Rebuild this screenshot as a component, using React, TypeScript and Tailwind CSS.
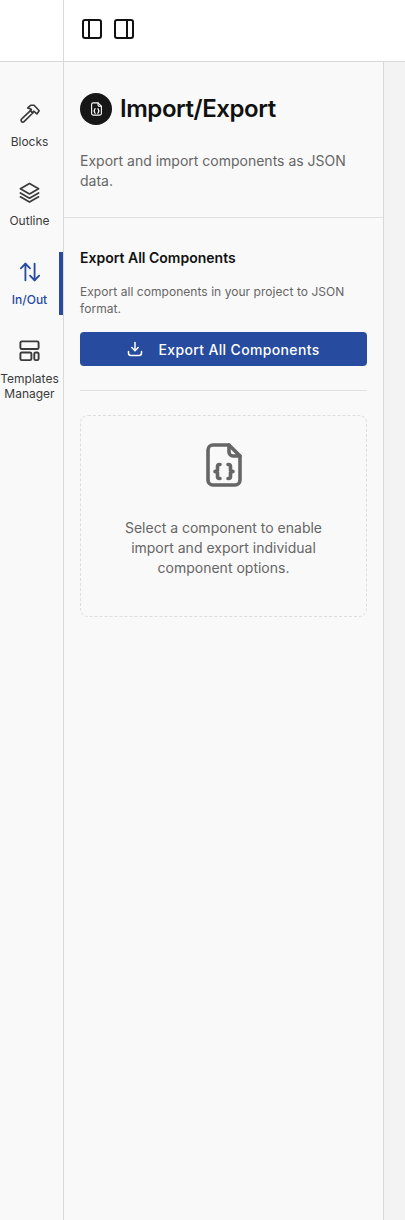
import type { ReactNode } from "react";

function FileJsonIcon({ className }: { className?: string }) {
  return (
    <svg viewBox="0 0 36 44" fill="none" stroke="currentColor" strokeWidth="3.6" strokeLinecap="round" strokeLinejoin="round" className={className}>
      <path d="M23 2H7a5 5 0 0 0-5 5v30a5 5 0 0 0 5 5h22a5 5 0 0 0 5-5V13L23 2z" />
      <path d="M23 2v7a4 4 0 0 0 4 4h7" />
      <path d="M14 21.5h-.5a2 2 0 0 0-2 2V26a2 2 0 0 1-2.5 2.500 2 2 0 0 1 2.500 2.500v2.500a2 2 0 0 0 2 2h.5" />
      <path d="M22 21.500h.5a2 2 0 0 1 2 2V26a2 2 0 0 0 2.500 2.500 2 2 0 0 0-2.500 2.500v2.500a2 2 0 0 1-2 2H22" />
    </svg>
  );
}

function HammerIcon({ className }: { className?: string }) {
  return (
    <svg viewBox="0 0 24 24" fill="none" stroke="currentColor" strokeWidth="1.8" strokeLinecap="round" strokeLinejoin="round" className={className}>
      <path d="M3 18.500 12.500 9.500l2.500 2.500-9.500 9.500a1.800 1.800 0 0 1-2.500-3z" />
      <path d="M9.500 6.500 13 3.500h3.500L22 9.500 19.500 13l-3.500-3-1 2-2.500-2.500 1-1.500z" />
    </svg>
  );
}

function LayersIcon({ className }: { className?: string }) {
  return (
    <svg viewBox="0 0 24 24" fill="none" stroke="currentColor" strokeWidth="1.800" strokeLinecap="round" strokeLinejoin="round" className={className}>
      <path d="M12 2.500 21.500 8 12 13.500 2.500 8z" />
      <path d="M2.500 12.500 12 18l9.500-5.500" />
      <path d="M2.500 16.500 12 22l9.500-5.500" />
    </svg>
  );
}

function SwapIcon({ className }: { className?: string }) {
  return (
    <svg viewBox="0 0 24 24" fill="none" stroke="currentColor" strokeWidth="2" strokeLinecap="round" strokeLinejoin="round" className={className}>
      <path d="M7 21V3" />
      <path d="M2 8l5-5 5 5" />
      <path d="M17 3v18" />
      <path d="M12 16l5 5 5-5" />
    </svg>
  );
}

function TemplatesIcon({ className }: { className?: string }) {
  return (
    <svg viewBox="0 0 24 24" fill="none" stroke="currentColor" strokeWidth="2" strokeLinejoin="round" className={className}>
      <rect x="2.500" y="2.500" width="19" height="8" rx="1.500" />
      <rect x="2.500" y="14" width="11.500" height="8" rx="1.500" />
      <rect x="17" y="14" width="4.500" height="8" rx="1.500" />
    </svg>
  );
}

function DownloadIcon({ className }: { className?: string }) {
  return (
    <svg viewBox="0 0 16 16" fill="none" stroke="currentColor" strokeWidth="1.500" strokeLinecap="round" strokeLinejoin="round" className={className}>
      <path d="M8 1.500v8" />
      <path d="M4.800 6.500 8 9.700l3.200-3.200" />
      <path d="M1.500 10.500v1.500a2.500 2.500 0 0 0 2.500 2.500h8a2.500 2.500 0 0 0 2.500-2.500v-1.500" />
    </svg>
  );
}

function NavItem({ label, icon, active }: { label: ReactNode; icon: ReactNode; active?: boolean }) {
  return (
    <div className={`flex flex-col items-center ${active ? "font-medium text-[#274b9f]" : "text-[#3b3b3b]"}`}>
      <div className="flex h-6 w-6 items-center justify-center">{icon}</div>
      <div className={`text-center text-[12px] leading-[15px] ${active ? "mt-[8px]" : "mt-[9px]"}`}>{label}</div>
    </div>
  );
}

export default function App() {
  return (
    <div className="flex h-[1220px] w-[405px] flex-col overflow-hidden bg-white font-['Inter',sans-serif]">
      <header className="flex h-[62px] shrink-0 border-b border-[#d9d9d9]">
        <div className="w-[64px] shrink-0 border-r border-[#d9d9d9]" />
        <div className="flex items-start gap-[12px] pl-[18px] pt-[19px]">
          <div className="h-[20px] w-[20px] rounded-[3px] border-2 border-[#111]">
            <div className="ml-[4px] h-full w-[2px] bg-[#111]" />
          </div>
          <div className="h-[20px] w-[20px] rounded-[3px] border-2 border-[#111]">
            <div className="ml-[10px] h-full w-[2px] bg-[#111]" />
          </div>
        </div>
      </header>
      <div className="flex flex-1">
        <nav className="flex w-[64px] shrink-0 flex-col border-r border-[#d9d9d9] bg-[#f9f9f9] pt-[39px]">
          <div className="mb-[31px] pr-[4px]">
            <NavItem label="Blocks" icon={<HammerIcon className="h-[22px] w-[22px] shrink-0" />} />
          </div>
          <div className="mb-[24px] pr-[4px]">
            <NavItem label="Outline" icon={<LayersIcon className="h-[23px] w-[23px] shrink-0" />} />
          </div>
          <div className="mb-[23px] h-[63px] border-r-4 border-[#274b9f] pt-[8px]">
            <NavItem active label="In/Out" icon={<SwapIcon className="h-[22px] w-[22px] shrink-0" />} />
          </div>
          <div className="pr-[4px]">
            <NavItem
              label={
                <>
                  Templates
                  <br />
                  Manager
                </>
              }
              icon={<TemplatesIcon className="h-[23px] w-[23px] shrink-0" />}
            />
          </div>
        </nav>
        <main className="w-[320px] shrink-0 border-r border-[#d9d9d9] bg-[#f9f9f9]">
          <div className="border-b border-[#e2e2e2] px-4 pb-[26px] pt-[31px]">
            <div className="flex items-center gap-2">
              <div className="flex h-8 w-8 items-center justify-center rounded-full bg-[#171717] text-white">
                <FileJsonIcon className="h-[14px] w-[11px]" />
              </div>
              <h1 className="text-[24px] font-semibold leading-8 tracking-[-0.45px] text-[#111]">Import/Export</h1>
            </div>
            <p className="mt-[26px] text-[14px] leading-5 text-[#666]">Export and import components as JSON data.</p>
          </div>
          <div className="px-4 pt-[30px]">
            <h2 className="text-[14px] font-semibold leading-5 text-[#111]">Export All Components</h2>
            <p className="mt-[15px] text-[12px] leading-[17px] tracking-[0.05px] text-[#666]">Export all components in your project to JSON format.</p>
            <button className="mt-[15px] flex h-[34px] w-full items-center justify-center gap-[15px] rounded bg-[#274b9f] text-[14px] font-medium tracking-[0.35px] text-white">
              <DownloadIcon className="h-4 w-4" />
              Export All Components
            </button>
            <div className="mt-6 border-t border-[#e2e2e2]" />
            <div className="mt-6 flex h-[202px] flex-col items-center rounded-lg border border-dashed border-[#dedede] px-8 pt-[27px]">
              <FileJsonIcon className="h-[44px] w-[36px] shrink-0 text-[#666]" />
              <p className="mt-[31px] text-center text-[14px] leading-5 text-[#666]">
                Select a component to enable import and export individual component options.
              </p>
            </div>
          </div>
        </main>
        <div className="flex-1 bg-[#f3f3f3]" />
      </div>
    </div>
  );
}
